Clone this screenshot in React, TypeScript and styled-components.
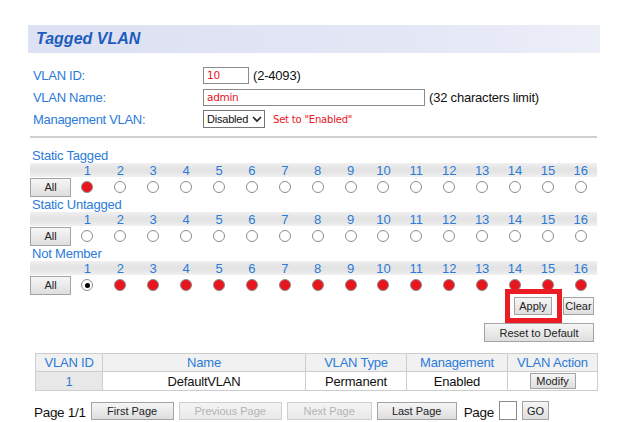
import React from "react";
import styled, { createGlobalStyle, css } from "styled-components";

const GlobalStyle = createGlobalStyle`
  html, body { margin: 0; padding: 0; background: #ffffff; }
  body { font-family: "Liberation Sans", Arial, sans-serif; }
`;

const BLUE = "#2b7bd8";
const RED = "#e8141e";

const Page = styled.div`
  width: 572px;
  padding: 25px 0 0 28px;
`;

const HeaderBar = styled.div`
  height: 28px;
  display: flex;
  align-items: center;
  padding-left: 8px;
  background: linear-gradient(to right, #dce1f3 0%, #e2e6f5 60%, #eceef8 100%);
`;

const Title = styled.h1`
  margin: 0;
  font-size: 16px;
  font-weight: bold;
  font-style: italic;
  color: #1c5cbd;
`;

const Form = styled.div`
  margin-top: 11px;
  padding-left: 5px;
  display: grid;
  grid-template-columns: 170px auto;
  grid-auto-rows: 22px;
  align-items: center;
`;

const Label = styled.div`
  font-size: 13px;
  letter-spacing: -0.3px;
  color: ${BLUE};
`;

const FieldCell = styled.div`
  display: flex;
  align-items: center;
  gap: 4px;
`;

const TextBox = styled.div<{ $w: number }>`
  box-sizing: border-box;
  width: ${(p) => p.$w}px;
  height: 17px;
  border: 1px solid #8a8a8a;
  padding-left: 3px;
  display: flex;
  align-items: center;
  font-family: "DejaVu Sans", Verdana, sans-serif;
  font-size: 10.5px;
  letter-spacing: -0.3px;
  color: ${RED};
  background: #fff;
`;

const Hint = styled.span`
  font-size: 13px;
  letter-spacing: -0.2px;
  color: #111;
`;

const SelectBox = styled.div`
  box-sizing: border-box;
  width: 62px;
  height: 18px;
  border: 1px solid #767676;
  display: flex;
  align-items: center;
  justify-content: space-between;
  padding: 0 2px 0 3px;
  font-size: 11px;
  letter-spacing: -0.2px;
  color: #111;
  background: #fff;
`;

const Warn = styled.span`
  margin-left: 4px;
  font-family: "DejaVu Sans", Verdana, sans-serif;
  font-size: 10px;
  letter-spacing: -0.2px;
  color: ${RED};
`;

const Separator = styled.div`
  margin: 6px 0 0 2px;
  width: 567px;
  height: 2px;
  background: #cfcfcf;
`;

const Ports = styled.div`
  margin: 10px 0 0 2px;
  width: 567px;
`;

const SectionLabel = styled.div`
  height: 15px;
  line-height: 15px;
  font-size: 13px;
  letter-spacing: -0.2px;
  color: ${BLUE};
  padding-left: 2px;
`;

const PortGrid = styled.div`
  display: grid;
  grid-template-columns: 41px repeat(16, 32.9px);
`;

const NumberBand = styled(PortGrid)`
  height: 14px;
  background: linear-gradient(to bottom, #f0f0f0 0%, #e3e3e3 45%, #e6e6e6 70%, #f1f1f1 100%);
`;

const PortNumber = styled.span`
  text-align: center;
  font-size: 13px;
  line-height: 16px;
  color: ${BLUE};
`;

const RadioRow = styled(PortGrid)`
  height: 20px;
  align-items: center;
`;

const buttonBase = css`
  box-sizing: border-box;
  border: 1px solid #a3a3a3;
  background: linear-gradient(to bottom, #f6f6f6, #dedede);
  font-family: "Liberation Sans", Arial, sans-serif;
  font-size: 11px;
  color: #222;
  padding: 0;
  display: inline-flex;
  align-items: center;
  justify-content: center;
`;

const SmallButton = styled.button<{ $w: number; $h?: number; $disabled?: boolean }>`
  ${buttonBase};
  width: ${(p) => p.$w}px;
  height: ${(p) => p.$h ?? 18}px;
  ${(p) =>
    p.$disabled &&
    css`
      color: #b4b4b4;
      border-color: #cfcfcf;
      background: linear-gradient(to bottom, #f4f4f4, #e9e9e9);
    `}
`;

type RadioKind = "empty" | "red" | "dot";

const Radio = styled.span<{ $kind: RadioKind }>`
  justify-self: center;
  box-sizing: border-box;
  width: 12px;
  height: 12px;
  border-radius: 50%;
  border: 1px solid #8c8c8c;
  background: ${(p) => (p.$kind === "red" ? RED : "#fff")};
  display: flex;
  align-items: center;
  justify-content: center;
  &::after {
    content: "";
    display: ${(p) => (p.$kind === "dot" ? "block" : "none")};
    width: 5px;
    height: 5px;
    border-radius: 50%;
    background: #000;
  }
`;

const Actions = styled.div`
  margin-top: 2px;
  padding-right: 6px;
  display: flex;
  flex-direction: column;
  align-items: flex-end;
  gap: 8px;
`;

const ActionRow = styled.div`
  display: flex;
  gap: 11px;
`;

const Highlight = styled.div`
  position: relative;
  display: flex;
  &::before {
    content: "";
    position: absolute;
    left: -9px;
    right: -10px;
    top: -8px;
    bottom: -8px;
    border: 5px solid #ec1c24;
    pointer-events: none;
  }
`;

const Table = styled.table`
  margin: 11px 0 0 7px;
  width: 562px;
  border-collapse: collapse;
  table-layout: fixed;
  border: 1px solid #bdbdbd;
`;

const Th = styled.th`
  height: 17px;
  padding: 0;
  border: 1px solid #cdcdcd;
  background: #f1f1f1;
  font-weight: normal;
  font-size: 13px;
  letter-spacing: -0.2px;
  color: ${BLUE};
  text-align: center;
`;

const Td = styled.td<{ $shade?: boolean; $blue?: boolean }>`
  height: 18px;
  padding: 0;
  border: 1px solid #cdcdcd;
  background: ${(p) => (p.$shade ? "#e8e8e8" : "#fff")};
  font-size: 13px;
  letter-spacing: -0.2px;
  color: ${(p) => (p.$blue ? BLUE : "#111")};
  text-align: center;
`;

const Pager = styled.div`
  margin-top: 10px;
  padding-left: 6px;
  display: flex;
  align-items: center;
  gap: 5px;
`;

const PagerText = styled.span<{ $ml?: number }>`
  font-size: 13.5px;
  letter-spacing: -0.3px;
  color: #111;
  margin-top: 4px;
  margin-left: ${(p) => p.$ml ?? 0}px;
`;

const PagerInput = styled.div`
  box-sizing: border-box;
  width: 18px;
  height: 19px;
  border: 1px solid #8a8a8a;
  background: #fff;
`;

const ports = Array.from({ length: 16 }, (_, i) => i + 1);

const Chevron = () => (
  <svg width="10" height="8" viewBox="0 0 10 8">
    <path d="M1 2 L5 6 L9 2" fill="none" stroke="#222" strokeWidth="1.6" />
  </svg>
);

function PortSection({ title, kinds }: { title: string; kinds: RadioKind[] }) {
  return (
    <>
      <SectionLabel>{title}</SectionLabel>
      <NumberBand>
        <span />
        {ports.map((n) => (
          <PortNumber key={n}>{n}</PortNumber>
        ))}
      </NumberBand>
      <RadioRow>
        <SmallButton $w={41} $h={19}>All</SmallButton>
        {kinds.map((k, i) => (
          <Radio key={i} $kind={k} />
        ))}
      </RadioRow>
    </>
  );
}

export default function App() {
  const tagged: RadioKind[] = ports.map((n) => (n === 1 ? "red" : "empty"));
  const untagged: RadioKind[] = ports.map(() => "empty");
  const notMember: RadioKind[] = ports.map((n) => (n === 1 ? "dot" : "red"));

  return (
    <>
      <GlobalStyle />
      <Page>
        <HeaderBar>
          <Title>Tagged VLAN</Title>
        </HeaderBar>

        <Form>
          <Label>VLAN ID:</Label>
          <FieldCell>
            <TextBox $w={46}>10</TextBox>
            <Hint>(2-4093)</Hint>
          </FieldCell>
          <Label>VLAN Name:</Label>
          <FieldCell>
            <TextBox $w={222}>admin</TextBox>
            <Hint>(32 characters limit)</Hint>
          </FieldCell>
          <Label>Management VLAN:</Label>
          <FieldCell>
            <SelectBox>
              <span>Disabled</span>
              <Chevron />
            </SelectBox>
            <Warn>Set to "Enabled"</Warn>
          </FieldCell>
        </Form>

        <Separator />

        <Ports>
          <PortSection title="Static Tagged" kinds={tagged} />
          <PortSection title="Static Untagged" kinds={untagged} />
          <PortSection title="Not Member" kinds={notMember} />
        </Ports>

        <Actions>
          <ActionRow>
            <Highlight>
              <SmallButton $w={38}>Apply</SmallButton>
            </Highlight>
            <SmallButton $w={31}>Clear</SmallButton>
          </ActionRow>
          <SmallButton $w={110} $h={19}>Reset to Default</SmallButton>
        </Actions>

        <Table>
          <colgroup>
            <col style={{ width: 67 }} />
            <col style={{ width: 203 }} />
            <col style={{ width: 101 }} />
            <col style={{ width: 101 }} />
            <col style={{ width: 90 }} />
          </colgroup>
          <thead>
            <tr>
              <Th>VLAN ID</Th>
              <Th>Name</Th>
              <Th>VLAN Type</Th>
              <Th>Management</Th>
              <Th>VLAN Action</Th>
            </tr>
          </thead>
          <tbody>
            <tr>
              <Td $shade $blue>1</Td>
              <Td>DefaultVLAN</Td>
              <Td>Permanent</Td>
              <Td>Enabled</Td>
              <Td>
                <SmallButton $w={46} $h={16}>Modify</SmallButton>
              </Td>
            </tr>
          </tbody>
        </Table>

        <Pager>
          <PagerText>Page 1/1</PagerText>
          <SmallButton $w={83}>First Page</SmallButton>
          <SmallButton $w={103} $disabled>Previous Page</SmallButton>
          <SmallButton $w={85} $disabled>Next Page</SmallButton>
          <SmallButton $w={80}>Last Page</SmallButton>
          <PagerText $ml={2}>Page</PagerText>
          <PagerInput />
          <SmallButton $w={27} $h={19}>GO</SmallButton>
        </Pager>
      </Page>
    </>
  );
}
